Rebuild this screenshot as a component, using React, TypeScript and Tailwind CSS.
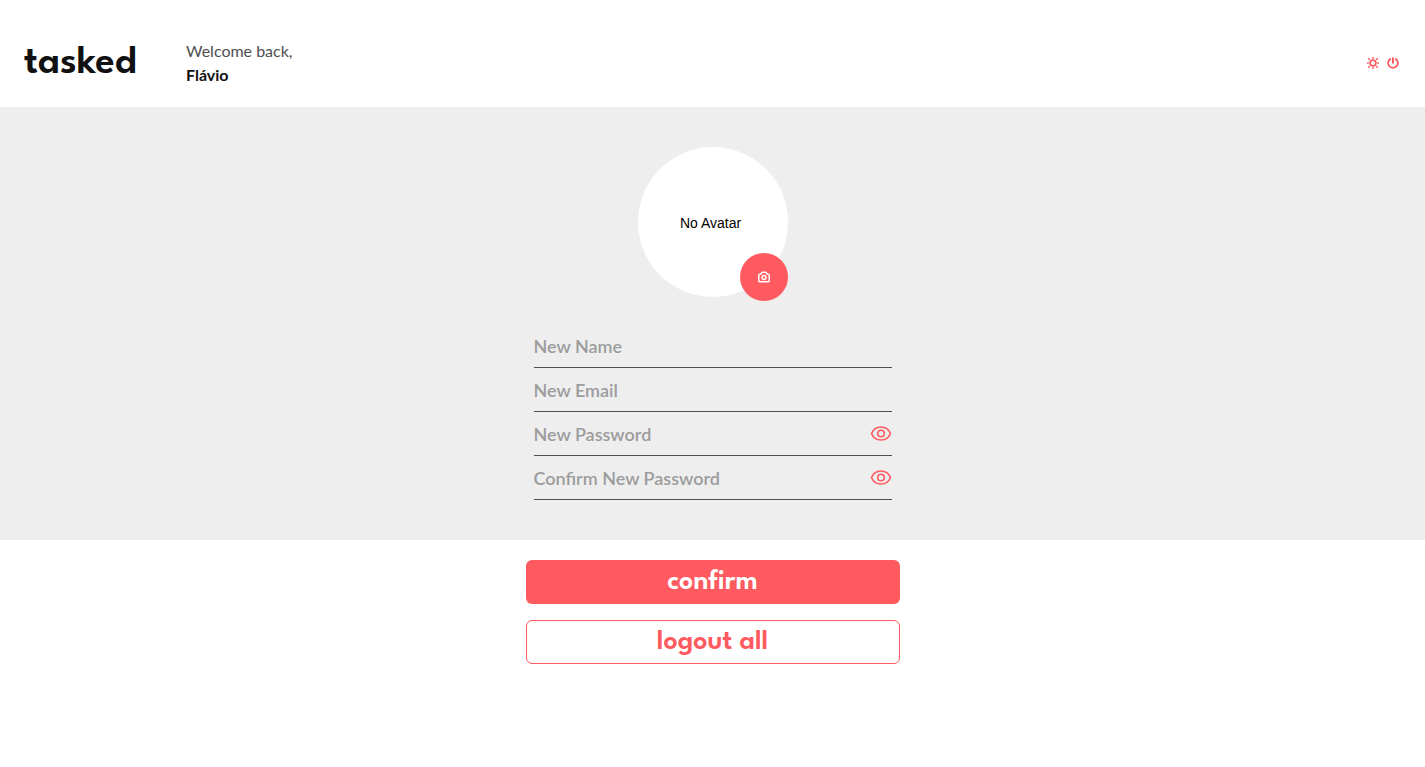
import { useState } from "react";

function SunIcon() {
  return (
    <svg className="size-3" viewBox="0 0 12 12" fill="none" stroke="currentColor" aria-hidden="true">
      <circle cx="6" cy="6" r="2.9" strokeWidth="1.7" />
      <path
        d="M6 0v1.7M6 10.3V12M0 6h1.7M10.3 6H12M1.3 1.3l1.4 1.4M9.3 9.3l1.4 1.4M1.3 10.7l1.4-1.4M9.3 2.7l1.4-1.4"
        strokeWidth="1.6"
      />
    </svg>
  );
}

function PowerIcon() {
  return (
    <svg className="size-3" viewBox="0 0 12 12" fill="none" stroke="currentColor" aria-hidden="true">
      <path d="M3.8 1.6a4.9 4.9 0 1 0 4.400 0" strokeWidth="1.8" />
      <path d="M6 .5v6" strokeWidth="2" />
    </svg>
  );
}

function CameraIcon() {
  return (
    <svg className="size-3" viewBox="0 0 12 12" fill="none" stroke="currentColor" aria-hidden="true">
      <path
        d="M1.7 3.2h.9L4.2 1.3h3.6l1.6 1.9h.9a.9.9 0 0 1 .9.9v5.7a.9.9 0 0 1-.9.9H1.7a.9.9 0 0 1-.9-.9V4.1a.9.9 0 0 1 .9-.9z"
        strokeWidth="1.5"
      />
      <circle cx="6" cy="6.5" r="2" strokeWidth="1.5" />
    </svg>
  );
}

function EyeIcon() {
  return (
    <svg className="h-4 w-[22px]" viewBox="0 0 22 16" fill="none" stroke="currentColor" strokeWidth="1.6" aria-hidden="true">
      <path d="M1.5 7.5C3.1 3.5 6.8 1 11 1s7.9 2.5 9.5 6.5C18.9 11.5 15.2 14 11 14S3.1 11.5 1.5 7.5z" strokeLinejoin="round" />
      <circle cx="11" cy="7.5" r="3.3" />
    </svg>
  );
}

type FieldProps = { id: string; label: string; type: "text" | "email" | "password" };

function Field({ id, label, type }: FieldProps) {
  const [visible, setVisible] = useState(false);
  const secret = type === "password";
  return (
    <div className="flex h-11 items-center border-b border-[#4f4f4f]">
      <input
        id={id}
        aria-label={label}
        type={secret && visible ? "text" : type}
        placeholder={label}
        className="h-10 min-w-0 flex-1 bg-transparent text-lg font-semibold text-[#111111] outline-none placeholder:text-[#9c9c9c]"
      />
      {secret && (
        <button
          type="button"
          aria-label={"Toggle " + label}
          onClick={() => setVisible(!visible)}
          className="text-[#ff5a5f]"
        >
          <EyeIcon />
        </button>
      )}
    </div>
  );
}

const displayFont = "font-['League_Spartan','Spartan','Lato',sans-serif]";

export default function App() {
  return (
    <div className="min-h-screen bg-white font-['Lato',sans-serif] text-[#111111]">
      <header className="flex items-center px-6 pt-[39px] pb-5">
        <h1 className={displayFont + " w-[162px] pt-0.5 text-[40px] leading-[46px] font-semibold"}>tasked</h1>
        <p className="flex-1 text-base text-[#4f4f4f]">
          Welcome back,
          <strong className="block font-bold text-[#111111]">Flávio</strong>
        </p>
        <div className="flex gap-2 pr-0.5 text-[#ff5a5f]">
          <button type="button" aria-label="Theme">
            <SunIcon />
          </button>
          <button type="button" aria-label="Sign out">
            <PowerIcon />
          </button>
        </div>
      </header>
      <main>
        <form>
          <section className="bg-[#eeeeee] py-10">
            <div className="relative mx-auto flex size-[150px] items-center justify-center rounded-full bg-white">
              <span className="pt-0.5 pr-1 font-['Liberation_Sans_Narrow','Liberation_Sans',sans-serif] text-sm text-black">
                No Avatar
              </span>
              <button
                type="button"
                aria-label="Change avatar"
                className="absolute right-0 -bottom-1 flex size-12 items-center justify-center rounded-full bg-[#ff5a5f] text-white"
              >
                <CameraIcon />
              </button>
            </div>
            <div className="mx-auto mt-[27px] max-w-[374px] px-2">
              <Field id="name" label="New Name" type="text" />
              <Field id="email" label="New Email" type="email" />
              <Field id="password" label="New Password" type="password" />
              <Field id="confirm" label="Confirm New Password" type="password" />
            </div>
          </section>
          <div className={displayFont + " mx-auto flex max-w-[374px] flex-col gap-4 pt-5 text-[28px] leading-8 font-semibold"}>
            <button type="submit" className="h-11 rounded-md bg-[#ff5a5f] text-white">
              confirm
            </button>
            <button type="button" className="h-11 rounded-md border border-[#ff5a5f] text-[#ff5a5f]">
              logout all
            </button>
          </div>
        </form>
      </main>
    </div>
  );
}
